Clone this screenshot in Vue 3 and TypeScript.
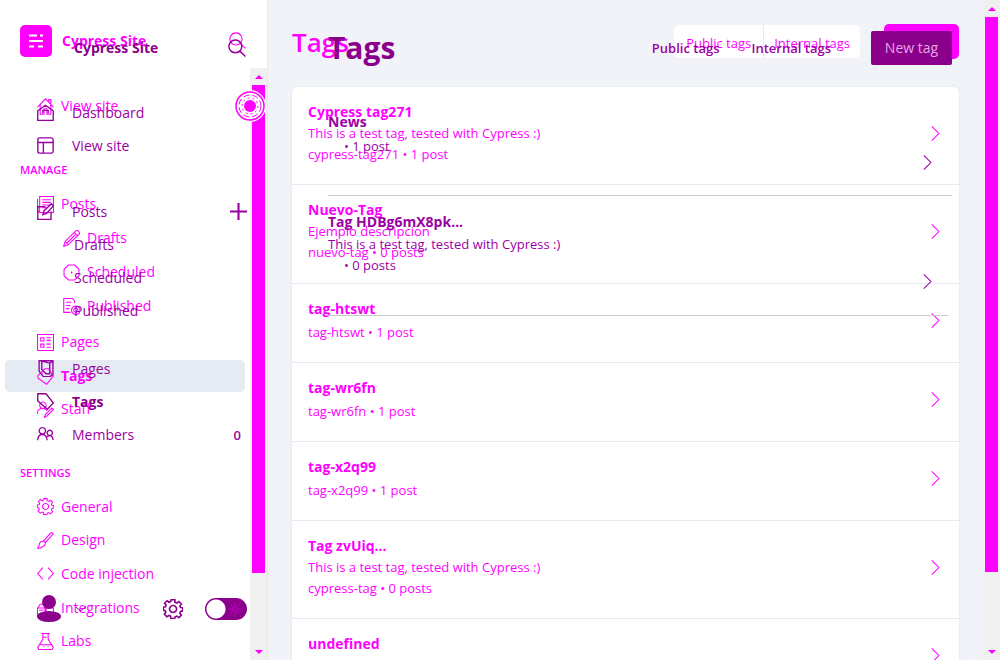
<script setup lang="ts">
interface NavItem { label: string; icon?: string; sub?: boolean; active?: boolean; after?: string }
interface TagItem { name: string; text?: string; meta?: string }

const icons: Record<string, string> = {
  home: 'M.5 8.5 8 .8l7.5 7.7M3 6.2v9h3.600v-5h2.800v5H13v-9M11 3.200V1.500h2v4',
  house: 'M.7 6.500v9h14.600v-9L8 1.200zM5.500 8.500V6h5v2.500',
  layout: 'M2.500.8h11q1.700 0 1.700 1.700v11q0 1.700-1.700 1.700h-11Q.8 15.200.8 13.500v-11Q.8.8 2.500.8zM.8 5.200h14.400M6 5.200v10',
  posts: 'M2.500.5h13v15h-13zM.5 2.500v11q0 2 2 2M5 3.500h8M5 6h8M5 8.500h8M5 11h5',
  compose: 'M8 3.500H.7v12h12.500V8M5.500 11l1-3.500L13.500.700l2 2L9 9.700z',
  pencil: 'M.7 15.300l1.300-4.500L12 .8q1.500-.8 2.700.5 1.200 1.200.500 2.700L5 14zM2 10.800 5 14M10.500 2.300l3.200 3.200M4 12 11.500 4.500',
  clock: 'M5 1h6l4 4v6l-4 4H5l-4-4V5zM8 7v1.500h1',
  published: 'M11 5V3L9 .5H.7v13H7M3 4h5M3 7h4M3 10h3M12 7.500a4 4 0 1 0 .1 0zM12 9.500a2 2 0 1 0 .1 0z',
  pages: 'M.5.5h15v15H.5zM3.500 3.500h3v3h-3zM3.500 9.500h3v3h-3zM9 3.500h4M9 6h4M9 9.500h4M9 12.500h4',
  book: 'M2 .7h13v13l-3 2H6l-4-5zM4.500 1v8l4 4h3.500V3zM12 3l3-2',
  tag: 'M.7 7.500 7.500.700H11l1 2 3.300 5L9 15.300 1 9.500zM5 4.500l.5.500',
  label: 'M.7.7h7.800l6.800 8.600-5.500 6L.7 7.500z',
  staff: 'M5.500 1a3 3 0 1 0 .1 0zM.5 11q0-4 5-4 2.500 0 4 2M7 15.500l1-3 6-6 1.500 1.500-6 6zM.5 11v1',
  members: 'M5 1.500a3 3 0 1 0 .1 0zM12 4a2.500 2.500 0 1 0 .1 0zM.7 13.500q0-5.500 4.300-5.500t4.500 5.500M9.500 10q4.500-3 5.800 3',
  gear: 'M6.5 .6h3v2l1.700.7 1.500-1.300 2 2-1.200 1.600.6 1.200 1.700.2v2.500l-1.700.4-.6 1.400 1.200 1.600-2 2-1.700-1.200-1.300.6-.4 1.300h-3L6 13.700l-1.200-.5-1.700 1-2-2 1.200-1.500-.6-1.400L.3 9V6.500L2 6.200l.5-1.300-1.200-1.500 2-2L4.900 2.600 6.200 2zM8 5.200a2.800 2.800 0 1 0 .1 0z',
  brush: 'M6 8.500 13 .8q2-.5 2.300 1L8 10zM6 8.500 8 10q0 2-1.500 3L3 15.300H.5Q2 14 2 12q.5-3 4-3.500z',
  code: 'M5.500 2.500 .7 8l4.800 5.500M10.500 2.500 15.300 8l-4.800 5.500',
  boxes: 'M.5 8.500h7v7h-7zM8.500 8.500h7v7h-7zM1 8l2-3h4v3M9 8V5h4l2 3M2 10.500h4',
  labs: 'M4 .5h8M5.500 1v5L.7 13.500l1 2h12.600l1-2L10.500 6V1M3 11h10M6 4h3M6 13h1M10 12.500h1',
  search: 'M6.500.8a5.700 5.700 0 1 0 .1 0zM10.800 11l4.700 4.500',
  plus: 'M8 0v16M0 8h16',
  arrow: 'M4.500 1.200 11.200 8l-6.700 6.800',
  down: 'M1 5l6 5.500L15 5',
}

const viewNav: NavItem[] = [{ label: 'View site', icon: 'home' }]
const manageNav: NavItem[] = [
  { label: 'Posts', icon: 'posts' },
  { label: 'Drafts', icon: 'pencil', sub: true },
  { label: 'Scheduled', icon: 'clock', sub: true },
  { label: 'Published', icon: 'published', sub: true },
  { label: 'Pages', icon: 'pages' },
  { label: 'Tags', icon: 'tag', active: true },
  { label: 'Staff', icon: 'staff' },
]
const settingsNav: NavItem[] = [
  { label: 'General', icon: 'gear' },
  { label: 'Design', icon: 'brush' },
  { label: 'Code injection', icon: 'code' },
  { label: 'Integrations', icon: 'boxes' },
  { label: 'Labs', icon: 'labs' },
]
const overNav: NavItem[][] = [
  [{ label: 'Dashboard', icon: 'house' }, { label: 'View site', icon: 'layout' }],
  [
    { label: 'Posts', icon: 'compose', after: 'plus' },
    { label: 'Drafts', sub: true },
    { label: 'Scheduled', sub: true },
    { label: 'Published', sub: true },
  ],
  [
    { label: 'Pages', icon: 'book' },
    { label: 'Tags', icon: 'label', active: true },
    { label: 'Members', icon: 'members', after: '0' },
  ],
]
const tags: TagItem[] = [
  { name: 'Cypress tag271', text: 'This is a test tag, tested with Cypress :)', meta: 'cypress-tag271 • 1 post' },
  { name: 'Nuevo-Tag', text: 'Ejemplo descripcion', meta: 'nuevo-tag • 0 posts' },
  { name: 'tag-htswt', meta: 'tag-htswt • 1 post' },
  { name: 'tag-wr6fn', meta: 'tag-wr6fn • 1 post' },
  { name: 'tag-x2q99', meta: 'tag-x2q99 • 1 post' },
  { name: 'Tag zvUiq...', text: 'This is a test tag, tested with Cypress :)', meta: 'cypress-tag • 0 posts' },
  { name: 'undefined' },
]
const overTags: TagItem[] = [
  { name: 'News', meta: '• 1 post' },
  { name: 'Tag HDBg6mX8pk...', text: 'This is a test tag, tested with Cypress :)', meta: '• 0 posts' },
]
</script>

<template>
  <div class="page">
    <div class="layer base">
      <aside class="side">
        <header class="brand">
          <svg class="logo" viewBox="0 0 32 32" aria-hidden="true">
            <rect width="32" height="32" rx="5" fill="#f0f" />
            <path d="M9 10.500h8M20 10.500h3M9 16h14M9 21.500h5M18 21.500h5" stroke="#fff" stroke-width="2" />
          </svg>
          <strong class="site">Cypress Site</strong>
          <button class="bare" type="button" aria-label="Search">
            <svg class="icon" viewBox="0 0 16 16"><path :d="icons.search" /></svg>
          </button>
        </header>
        <div class="side-body">
          <nav class="nav">
            <a v-for="n in viewNav" :key="n.label" class="item" href="#"><svg class="icon" viewBox="0 0 16 16"><path :d="icons[n.icon!]" /></svg>{{ n.label }}</a>
            <h2 class="group">MANAGE</h2>
            <div class="manage">
              <a v-for="n in manageNav" :key="n.label" class="item" :class="{ sub: n.sub, active: n.active, paged: n.icon === 'pages' }" href="#"><svg class="icon" viewBox="0 0 16 16"><path :d="icons[n.icon!]" /></svg>{{ n.label }}</a>
            </div>
            <h2 class="group">SETTINGS</h2>
            <div class="settings">
              <a v-for="n in settingsNav" :key="n.label" class="item" href="#"><svg class="icon" viewBox="0 0 16 16"><path :d="icons[n.icon!]" /></svg>{{ n.label }}</a>
            </div>
          </nav>
          <div class="scroll" aria-hidden="true"><i class="up"></i><i class="thumb"></i><i class="down"></i></div>
          <svg class="pulse" viewBox="0 0 32 32" aria-hidden="true">
            <circle cx="16" cy="16" r="16" fill="#fff" />
            <circle cx="16" cy="16" r="14" fill="none" stroke="#f0f" stroke-width="1.500" />
            <circle cx="16" cy="16" r="11" fill="none" stroke="#f0f" stroke-dasharray="6 3" />
            <circle cx="16" cy="16" r="8" fill="none" stroke="#f0f" stroke-dasharray="2 3" />
            <circle cx="16" cy="16" r="6" fill="#f0f" />
          </svg>
        </div>
      </aside>
      <main class="main">
        <header class="top">
          <h1>Tags</h1>
          <div class="switch"><button type="button">Public tags</button><button type="button">Internal tags</button></div>
          <button class="new" type="button" aria-label="New tag"></button>
        </header>
        <section class="card">
          <a v-for="t in tags" :key="t.name" class="row" :class="{ tall: t.text }" href="#">
            <span class="copy"><b>{{ t.name }}</b><span v-if="t.text">{{ t.text }}</span><span v-if="t.meta" class="meta">{{ t.meta }}</span></span>
            <svg class="icon arrow" viewBox="0 0 16 16"><path :d="icons.arrow" /></svg>
          </a>
        </section>
      </main>
      <div class="scroll window" aria-hidden="true"><i class="up"></i><i class="thumb"></i><i class="down"></i></div>
    </div>

    <div class="layer over">
      <aside class="side">
        <header class="brand">
          <strong class="site">Cypress Site</strong>
          <button class="bare" type="button" aria-label="Search site">
            <svg class="icon find" viewBox="0 0 16 16"><path :d="icons.search" /></svg>
          </button>
        </header>
        <nav class="nav">
          <div v-for="(g, i) in overNav" :key="i" class="set">
            <a v-for="n in g" :key="n.label" class="item" :class="{ sub: n.sub, active: n.active }" href="#">
              <svg v-if="n.icon" class="icon" viewBox="0 0 16 16"><path :d="icons[n.icon]" /></svg>
              <span class="text">{{ n.label }}</span>
              <svg v-if="n.after === 'plus'" class="icon plus" viewBox="0 0 16 16"><path :d="icons.plus" /></svg>
              <span v-else-if="n.after" class="count">{{ n.after }}</span>
            </a>
          </div>
        </nav>
        <footer class="foot">
          <button class="bare user" type="button" aria-label="Account">
            <svg class="avatar" viewBox="0 0 24 27"><circle cx="12" cy="7" r="7" /><ellipse cx="12" cy="21.500" rx="12" ry="5.500" /></svg>
            <svg class="icon small" viewBox="0 0 16 16"><path :d="icons.down" /></svg>
          </button>
          <button class="bare" type="button" aria-label="Settings">
            <svg class="icon cog" viewBox="0 0 16 16"><path :d="icons.gear" /></svg>
          </button>
          <label class="toggle">
            <input type="checkbox" aria-label="Dark mode" />
            <svg viewBox="0 0 16 16" aria-hidden="true"><circle cx="8" cy="8" r="2.500" /><path d="M8 1v3M8 12v3M1 8h3M12 8h3M3 3l2 2M11 11l2 2M13 3l-2 2M5 11l-2 2" /></svg>
          </label>
        </footer>
      </aside>
      <main class="main">
        <header class="top">
          <h1>Tags</h1>
          <div class="switch"><button type="button">Public tags</button><button type="button">Internal tags</button></div>
          <button class="new" type="button">New tag</button>
        </header>
        <section class="list">
          <a v-for="t in overTags" :key="t.name" class="row" :class="{ tall: t.text }" href="#">
            <span class="copy"><b>{{ t.name }}</b><span v-if="t.text">{{ t.text }}</span><span class="meta">{{ t.meta }}</span></span>
            <svg class="icon arrow" viewBox="0 0 16 16"><path :d="icons.arrow" /></svg>
          </a>
        </section>
      </main>
    </div>
  </div>
</template>

<style>
body { margin: 0; overflow: hidden; }
</style>

<style scoped>
* { box-sizing: border-box; }
.page { position: relative; height: 100vh; overflow: hidden; background: #f1f3f8; font: 14px/22px "Open Sans", "Noto Sans", sans-serif; }
.layer { display: flex; height: 100%; }
.base { color: #f0f; }
.over { position: absolute; inset: 0; color: #9b00a3; pointer-events: none; }
a { color: inherit; text-decoration: none; }
button { font: inherit; color: inherit; border: 0; background: none; padding: 0; }
h1, h2 { margin: 0; }
.icon { width: 17px; height: 17px; flex: none; fill: none; stroke: currentColor; stroke-width: 1; display: block; }
.side { width: 268px; flex: none; display: flex; flex-direction: column; }
.base .side { background: #fff; border-right: 1px solid #e6e9f0; }
.brand { display: flex; align-items: center; height: 68px; flex: none; padding: 14px 21px 0 20px; }
.base .brand .bare { padding-bottom: 2px; }
.logo { width: 32px; height: 32px; margin-right: 10px; }
.site { flex: 1; font-size: 14px; font-weight: 700; }
.side-body { position: relative; display: flex; flex: 1; min-height: 0; overflow: hidden; }
.nav { flex: 1; padding: 21px 5px 0; }
.item { display: flex; align-items: center; height: 34px; padding: 0 8px 0 32px; gap: 7px; }
.item.sub { padding-left: 58px; }
.paged { margin-top: 2px; }
.active { font-weight: 700; }
.base .active { background: #e6eaf2; border-radius: 5px; height: 32px; margin: 1px 0; }
.group { height: 34px; margin-top: 30px; padding-left: 15px; font-size: 11px; font-weight: 600; line-height: 34px; }
.manage + .group { margin-top: 31px; }
.manage .item:last-child { height: 32px; }
.settings { display: grid; grid-template-rows: repeat(5, 1fr); height: 168px; align-items: center; }
.settings .item { height: 32px; }
.scroll { width: 17px; flex: none; background: #f0f0f0; display: flex; flex-direction: column; align-items: center; }
.scroll .thumb { width: 13px; background: #f0f; flex: 1; margin-bottom: 70px; }
.up, .down { width: 0; height: 4px; border: 4px solid transparent; border-top-width: 0; border-bottom: 4px solid #f0f; margin: 7px 0 6px; }
.down { border-bottom-width: 0; border-top: 4px solid #f0f; }
.pulse { position: absolute; right: 1px; top: 22px; width: 32px; height: 32px; }
.main { flex: 1; min-width: 0; padding: 0 24px; }
.top { display: flex; align-items: center; height: 87px; padding-bottom: 4px; }
h1 { flex: 1; font-size: 26px; font-weight: 600; line-height: 36px; }
.switch { display: flex; background: #fff; border-radius: 5px; font-size: 13px; }
.base .switch button { height: 33px; padding: 2px 12px 0; }
.base .switch button + button { padding: 2px 10px 0; border-left: 1px solid #e3eaf2; }
.base .new { width: 75px; height: 35px; margin-left: 24px; background: #f0f; border-radius: 5px; }
.card { background: #fff; border-radius: 5px 5px 0 0; box-shadow: 0 0 2px #d5dae3; }
.row { display: flex; align-items: center; justify-content: space-between; min-height: 79px; padding: 0 15px 0 16px; border-bottom: 1px solid #e3eaf2; }
.row.tall { min-height: 99px; }
.card .row:first-child, .card .row:nth-child(6) { min-height: 98px; }
.copy { display: flex; flex-direction: column; align-self: flex-start; padding-top: 14px; font-size: 13px; line-height: 21px; }
.copy b { font-size: 14px; font-weight: 700; line-height: 22px; }
.copy b + .meta { padding-top: 2px; }
.arrow { margin-bottom: 5px; }
.window { width: 17px; }
.window .thumb { margin-bottom: 71px; }

.over .icon { stroke-width: 1.3; }
.over .arrow { stroke-width: 1; }
.over .brand { height: 81px; padding: 14px 22px 0 74px; }
.over .find { width: 18px; height: 18px; }
.over .site { color: #8b008b; }
.over .nav { padding-top: 15px; }
.over .item { height: 33px; gap: 18px; }
.over .sub { padding-left: 69px; }
.over .set { padding-bottom: 33px; }
.over .set + .set { padding-bottom: 25px; }
.over .active { color: #8b008b; }
.text { flex: 1; }
.over .plus { stroke-width: 2; margin-right: 8px; }
.count { padding-right: 14px; font-size: 13px; font-weight: 600; }
.foot { display: flex; align-items: center; margin-top: auto; padding: 0 21px 38px 37px; color: #8b008b; }
.user { display: flex; align-items: center; gap: 14px; flex: 1; }
.avatar { width: 24px; height: 27px; fill: currentColor; }
.small { width: 12px; height: 12px; }
.cog { width: 20px; height: 20px; }
.toggle { position: relative; display: flex; margin-left: 22px; }
.toggle input { appearance: none; width: 42px; height: 22px; margin: 0; border-radius: 11px; background: radial-gradient(circle at 11px 11px, #fff 9px, #8b008b 10px); }
.toggle svg { position: absolute; right: 5px; top: 4px; width: 14px; height: 14px; fill: none; stroke: #d800d8; }
.over .main { padding: 0 48px 0 60px; }
.over .top { height: 96px; padding: 0; }
.over h1 { font-size: 30px; font-weight: 700; color: #8b008b; line-height: 40px; }
.over .switch { background: none; gap: 32px; font-weight: 600; }
.over .new { width: 81px; height: 34px; margin-left: 40px; background: #8b008b; color: #e7a6e7; border-radius: 2px; font-size: 14px; }
.list .row { min-height: 100px; padding: 0 16px 0 0; border-color: #ccc; }
.list .row.tall { min-height: 120px; padding: 0 12px 0 0; margin-right: 4px; }
.list .copy { padding-top: 14px; }
.list .meta, .list .copy b + .meta { padding: 0 0 0 16px; }
.list .copy b { line-height: 24px; }
.list .copy b + .meta { padding-top: 2px; }
.list .row:first-child .arrow { margin: 34px 0 0; }
.list .tall .arrow { margin: 52px 0 0; }
</style>
